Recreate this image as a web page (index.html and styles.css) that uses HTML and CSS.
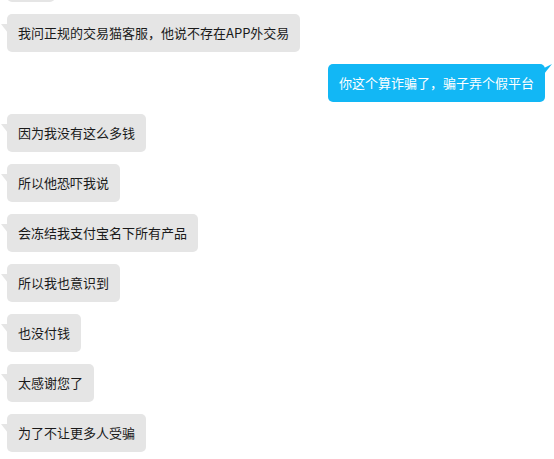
FILE: index.html
```html
<!DOCTYPE html>
<html lang="zh-CN">
<head>
<meta charset="utf-8">
<link rel="stylesheet" href="styles.css">
</head>
<body>
<div class="chat">
  <div class="msg left cut"><div class="bubble"></div></div>
  <div class="msg left"><div class="bubble">我问正规的交易猫客服，他说不存在APP外交易</div></div>
  <div class="msg right"><div class="bubble">你这个算诈骗了，骗子弄个假平台</div></div>
  <div class="msg left"><div class="bubble">因为我没有这么多钱</div></div>
  <div class="msg left"><div class="bubble">所以他恐吓我说</div></div>
  <div class="msg left"><div class="bubble">会冻结我支付宝名下所有产品</div></div>
  <div class="msg left"><div class="bubble">所以我也意识到</div></div>
  <div class="msg left"><div class="bubble">也没付钱</div></div>
  <div class="msg left"><div class="bubble">太感谢您了</div></div>
  <div class="msg left"><div class="bubble">为了不让更多人受骗</div></div>
</div>
</body>
</html>
```
FILE: styles.css
```css
html, body {
  margin: 0;
  padding: 0;
  background: #ffffff;
  overflow: hidden;
}
.chat {
  display: flex;
  flex-direction: column;
  gap: 12px;
  padding: 0 9px 0 7px;
  margin-top: -36px;
  font-family: "Microsoft YaHei", "Noto Sans CJK SC", "Noto Sans", sans-serif;
  font-size: 13px;
}
.msg {
  display: flex;
}
.msg.right {
  justify-content: flex-end;
}
.bubble {
  position: relative;
  height: 38px;
  box-sizing: border-box;
  padding: 10px 11px;
  line-height: 18px;
  border-radius: 5px;
  white-space: nowrap;
}
.left .bubble {
  background: #e5e5e5;
  color: #1a1a1a;
}
.cut .bubble {
  width: 48px;
}
.right .bubble {
  background: #12b7f5;
  color: #ffffff;
}
.left .bubble::before {
  content: "";
  position: absolute;
  left: -6px;
  top: 10px;
  width: 7px;
  height: 9px;
  background: #e5e5e5;
  clip-path: polygon(0 0, 100% 0, 100% 100%);
}
.right .bubble::after {
  content: "";
  position: absolute;
  right: -7px;
  top: 0;
  width: 8px;
  height: 10px;
  background: #12b7f5;
  clip-path: polygon(0 40%, 100% 0, 0 100%);
}
```
